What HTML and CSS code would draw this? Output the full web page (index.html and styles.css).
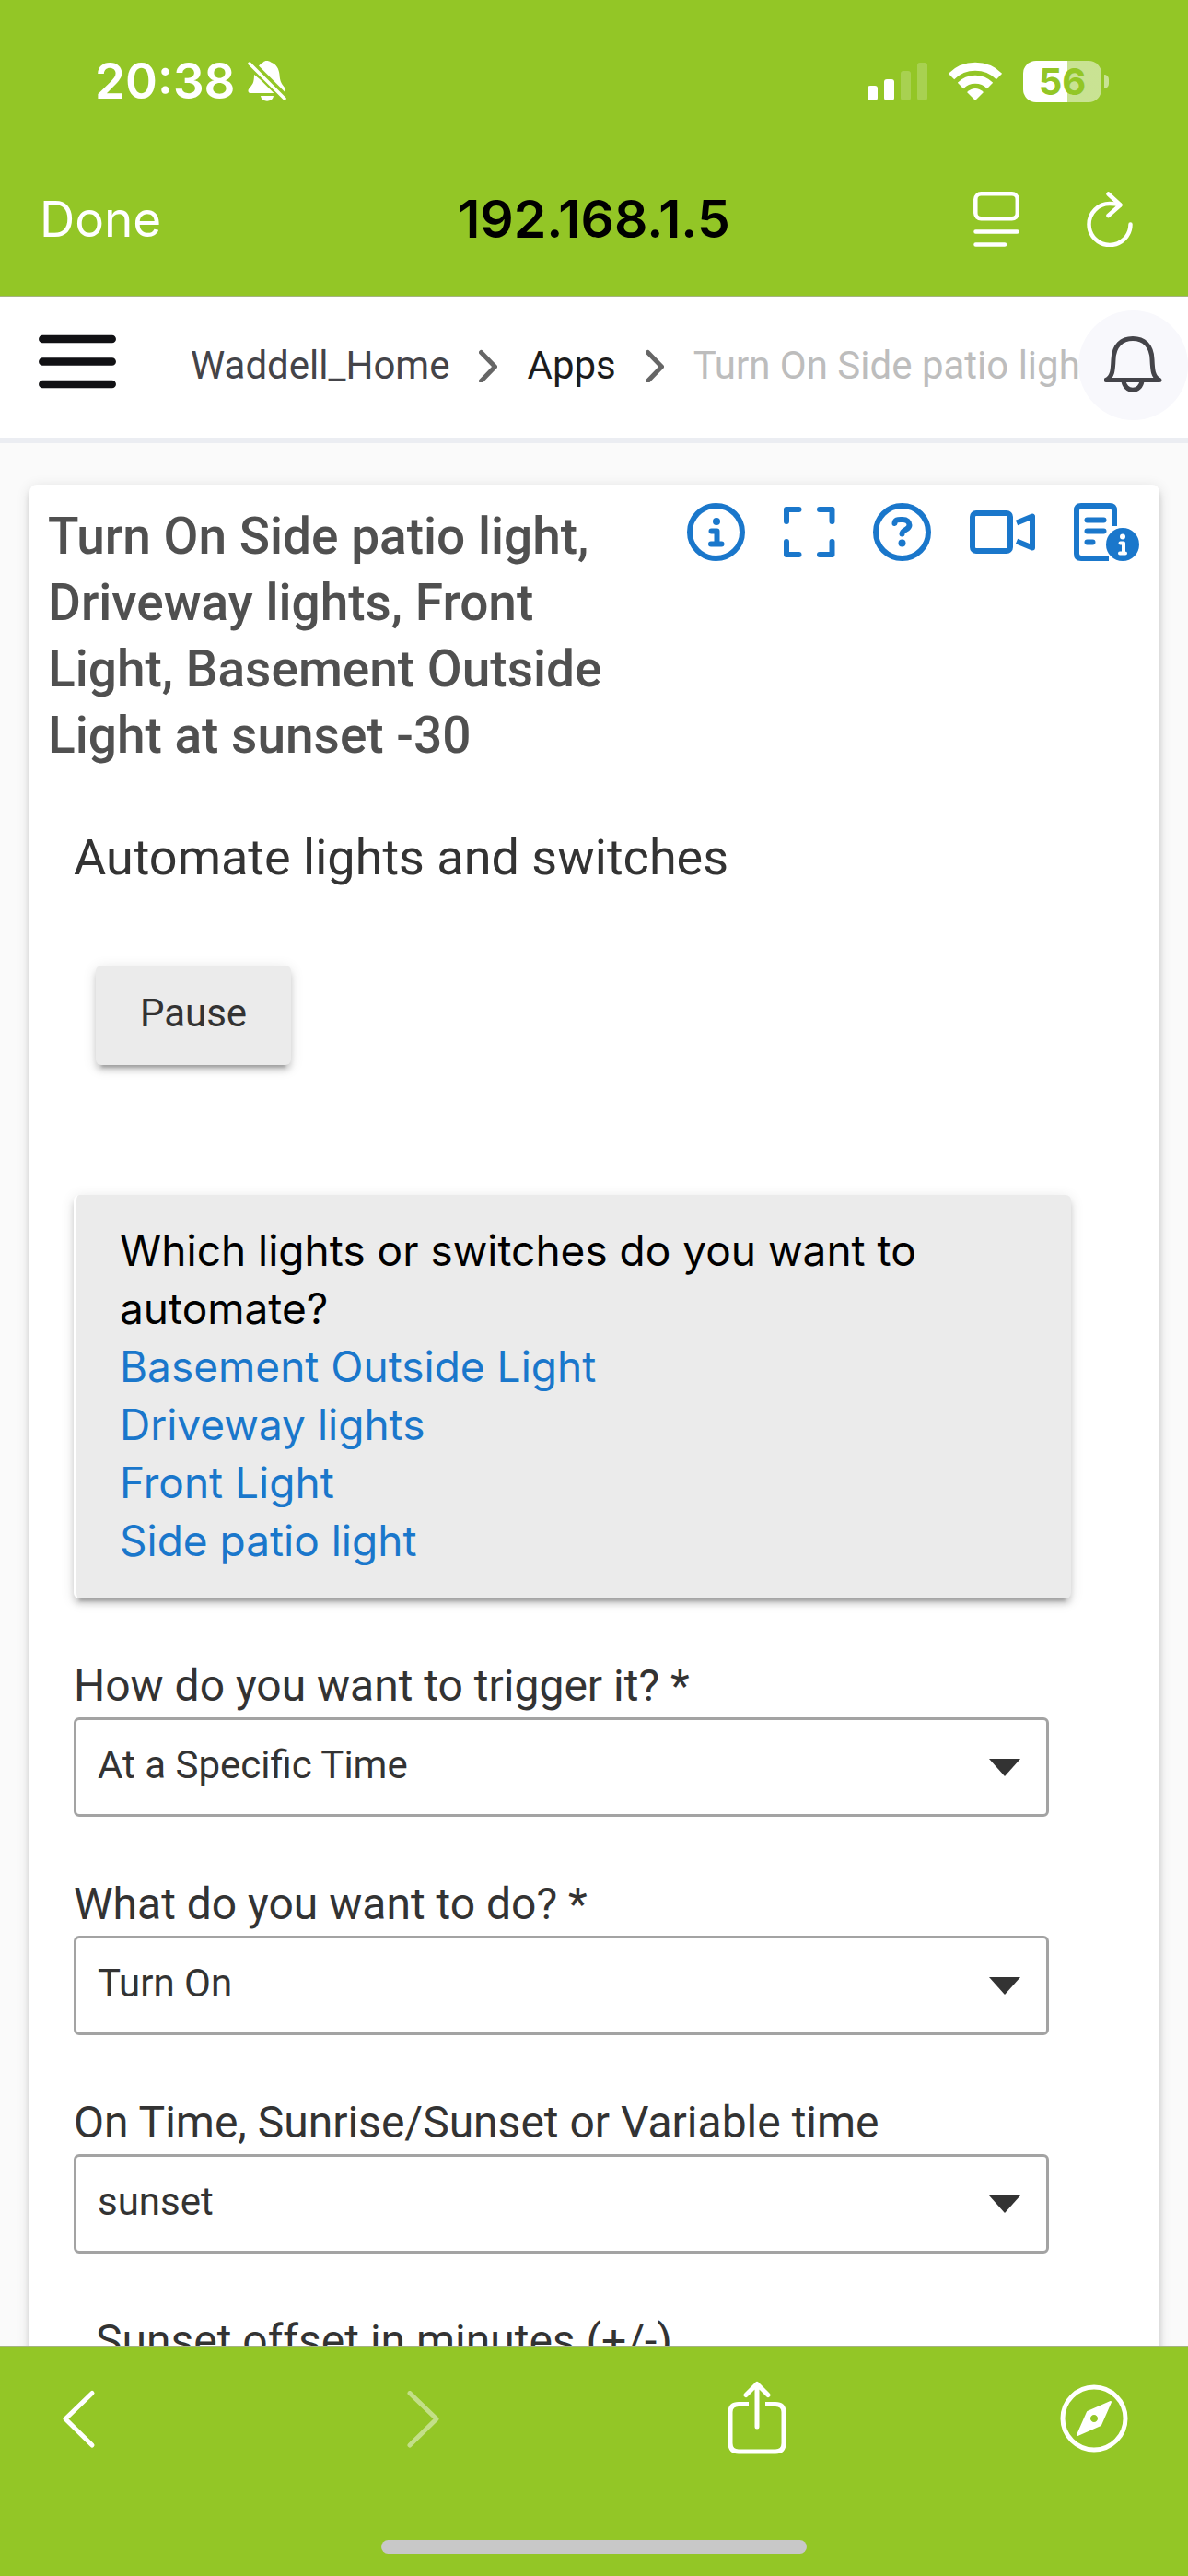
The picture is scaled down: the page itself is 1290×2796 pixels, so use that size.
FILE: index.html
```html
<!DOCTYPE html>
<html lang="en">
<head>
    <meta charset="UTF-8">
    <meta name="viewport" content="width=device-width, initial-scale=1.0">
    <title>192.168.1.5</title>
    <link rel="stylesheet" href="styles.css">
</head>
<body>
    <!-- Browser top -->
    <div class="browser-top">
        <div class="status-bar">
            <span class="status-time">20:38</span>
            <svg class="status-mute" width="42" height="46" viewBox="0 0 42 46" fill="#fff">
                <path d="M12 6.500C14 4 16 3 17 2.500C18 0.500 23 0.500 25 2.500C31 4.500 34 10 34.500 16C35 24 37 26 40 30C41.500 32 41.500 34 40 34.500Z"/>
                <path d="M7 16L32 36H3C0 36 0 32.500 1.500 31C5 27 7 25 7 16Z"/>
                <path d="M14 39H28C27 46.500 15 46.500 14 39Z"/>
                <path d="M2 4L40 42" stroke="#93c626" stroke-width="8"/>
                <path d="M2 4L40 42" stroke="#fff" stroke-width="3.500" stroke-linecap="round"/>
            </svg>
            <div class="status-right">
                <svg width="65" height="41" viewBox="0 0 65 41" fill="#fff">
                    <rect x="0" y="25" width="11" height="16" rx="3"/>
                    <rect x="18" y="18" width="11" height="23" rx="3"/>
                    <rect x="36" y="9" width="11" height="32" rx="3" opacity=".2"/>
                    <rect x="54" y="0" width="11" height="41" rx="3" opacity=".2"/>
                </svg>
                <svg width="58" height="42" viewBox="0 0 58 42" fill="none" stroke="#fff" stroke-width="9">
                    <path d="M3 16A37 37 0 0 1 55 16"/>
                    <path d="M13 26A22.500 22.500 0 0 1 45 26"/>
                    <path d="M29 42L20 33Q29 25 38 33Z" fill="#fff" stroke="none"/>
                </svg>
                <div class="battery">
                    <span class="battery-level">56</span>
                    <span class="battery-tip"></span>
                </div>
            </div>
        </div>
        <div class="address-bar">
            <button type="button" class="done-btn">Done</button>
            <div class="address">192.168.1.5</div>
            <div class="address-actions">
                <button type="button" class="icon-btn" aria-label="Page settings">
                    <svg width="50" height="60" viewBox="0 0 50 60" fill="none" stroke="#fff" stroke-width="4.500" stroke-linecap="round">
                        <rect x="2.300" y="2.300" width="45.500" height="27" rx="6"/>
                        <path d="M2.500 43.500H47.500M2.500 57.500H34"/>
                    </svg>
                </button>
                <button type="button" class="icon-btn" aria-label="Reload">
                    <svg width="50" height="60" viewBox="0 0 50 60" fill="none" stroke="#fff" stroke-width="4.500" stroke-linecap="round" stroke-linejoin="round">
                        <path d="M47.500 35.500A22.500 22.500 0 1 1 25 13Q31 13 36 14.500"/>
                        <path d="M23.500 2.500L36.500 14.500L23.500 26"/>
                    </svg>
                </button>
            </div>
        </div>
    </div>

    <!-- Site header -->
    <header class="site-header">
        <button type="button" class="icon-btn" aria-label="Menu">
            <svg width="84" height="72" viewBox="0 0 84 72" stroke="#111114" stroke-width="8.500" stroke-linecap="round">
                <path d="M4.300 7H79.700M4.300 31.500H79.700M4.300 56H79.700"/>
            </svg>
        </button>
        <nav class="breadcrumb">
            <a href="#" class="crumb-home">Waddell_Home</a>
            <svg width="20" height="36" viewBox="0 0 20 36"><path d="M2.500 3.500L17.500 19L2.500 34.500"/></svg>
            <a href="#" class="crumb-apps">Apps</a>
            <svg width="20" height="36" viewBox="0 0 20 36"><path d="M2.500 3.500L17.500 19L2.500 34.500"/></svg>
            <span class="crumb-current">Turn On Side patio light, Driveway lights</span>
        </nav>
        <button type="button" class="bell-btn" aria-label="Notifications">
            <svg width="64" height="64" viewBox="0 0 64 64" fill="none" stroke="#444449" stroke-width="5" stroke-linecap="round" stroke-linejoin="round">
                <path d="M2 47.500H60C53 44 52.500 37 52 25C51.500 10 43 2.500 31 2.500C19 2.500 10.500 10 10 25C9.500 37 9 44 2 47.500Z"/>
                <path d="M21 48C22 61.500 40 61.500 41 48"/>
            </svg>
        </button>
    </header>

    <main class="page">
        <div class="app-card">
            <div class="app-head">
                <h1>Turn On Side patio light, Driveway lights, Front Light, Basement Outside Light at sunset -30</h1>
                <div class="app-icons">
                    <button type="button" class="icon-btn" aria-label="Info">
                        <svg width="63" height="63" viewBox="0 0 63 63">
                            <circle cx="31.500" cy="31.500" r="28.500"/>
                            <path d="M26.500 30.500H32.500V44.500M26 44.500H37.500"/>
                            <circle class="dot" cx="32" cy="20" r="4"/>
                        </svg>
                    </button>
                    <button type="button" class="icon-btn" aria-label="Full screen">
                        <svg width="63" height="63" viewBox="0 0 63 63">
                            <path d="M7 20V7H20.500M43 7H56.500V20M56.500 42V56H43M20.500 56H7V42"/>
                        </svg>
                    </button>
                    <button type="button" class="icon-btn" aria-label="Help">
                        <svg width="63" height="63" viewBox="0 0 63 63">
                            <circle cx="31.500" cy="31.500" r="28.500"/>
                            <path d="M23.500 22C24 17.500 27 18 32 18C37 18 39.500 20.500 39.500 24C39.500 29 31.500 29 31.500 33.500"/>
                            <circle class="dot" cx="31.500" cy="43.500" r="4"/>
                        </svg>
                    </button>
                    <button type="button" class="icon-btn" aria-label="Video">
                        <svg width="79" height="63" viewBox="0 0 79 63">
                            <rect x="7" y="11" width="41" height="41" rx="4"/>
                            <path class="cut" d="M55 21.500L72 14.500V48.500L55 41.500"/>
                        </svg>
                    </button>
                    <button type="button" class="icon-btn" aria-label="Documentation">
                        <svg width="71" height="63" viewBox="0 0 71 63">
                            <path class="cut" d="M44 25V8Q44 3 39 3H8Q3 3 3 8V55Q3 60 8 60H38"/>
                            <path d="M14.500 18.500H32.500M14.500 30.500H32.500M14.500 42.500H20.500"/>
                            <circle class="dot" cx="53" cy="45" r="18"/>
                            <circle class="mini-dot" cx="53" cy="36.500" r="3"/>
                            <path class="mini" d="M50.500 43.500H54V54.500M50 54.500H56"/>
                        </svg>
                    </button>
                </div>
            </div>

            <form class="app-body">
                <h2>Automate lights and switches</h2>
                <button type="button" class="pause-btn">Pause</button>

                <div class="device-box">
                    <p>Which lights or switches do you want to automate?</p>
                    <a href="#">Basement Outside Light</a>
                    <a href="#">Driveway lights</a>
                    <a href="#">Front Light</a>
                    <a href="#">Side patio light</a>
                </div>

                <div class="field">
                    <label for="trigger">How do you want to trigger it? *</label>
                    <div class="select-wrap">
                        <select id="trigger"><option>At a Specific Time</option></select>
                    </div>
                </div>
                <div class="field">
                    <label for="action">What do you want to do? *</label>
                    <div class="select-wrap">
                        <select id="action"><option>Turn On</option></select>
                    </div>
                </div>
                <div class="field">
                    <label for="onTime">On Time, Sunrise/Sunset or Variable time</label>
                    <div class="select-wrap">
                        <select id="onTime"><option>sunset</option></select>
                    </div>
                </div>
                <div class="field field-offset">
                    <label for="offset">Sunset offset in minutes (+/-)</label>
                    <input type="number" id="offset" value="-30">
                </div>
            </form>
        </div>
    </main>

    <!-- Browser bottom -->
    <footer class="browser-bottom">
        <div class="toolbar">
            <button type="button" class="icon-btn" aria-label="Back">
                <svg width="74" height="80" viewBox="0 0 74 80"><path d="M48 13.500L19 41.500L48 70"/></svg>
            </button>
            <button type="button" class="icon-btn" aria-label="Forward" disabled>
                <svg width="74" height="80" viewBox="0 0 74 80" opacity=".45"><path d="M27 13.500L56 41.500L27 70"/></svg>
            </button>
            <button type="button" class="icon-btn" aria-label="Share">
                <svg width="74" height="80" viewBox="0 0 74 80">
                    <path class="tray" d="M28 25.500H17Q8 25.500 8 34V68Q8 77 17 77H57Q66 77 66 68V34Q66 25.500 57 25.500H46"/>
                    <path d="M37 3.500V50M25 15.500L37 3.500L49 15.500"/>
                </svg>
            </button>
            <button type="button" class="icon-btn" aria-label="Open in browser">
                <svg width="74" height="80" viewBox="0 0 74 80">
                    <circle cx="37" cy="41" r="34"/>
                    <path class="needle" fill-rule="evenodd" d="M55 23L44 48L19 59L30 34ZM37 36A5 5 0 1 0 37 46A5 5 0 1 0 37 36Z"/>
                </svg>
            </button>
        </div>
        <div class="home-indicator"></div>
    </footer>
</body>
</html>
```
FILE: styles.css
```css
* {
    box-sizing: border-box;
}
body {
    margin: 0;
    height: 100vh;
    display: flex;
    flex-direction: column;
    overflow: hidden;
    background: #fafafa;
    color: #333;
    font-family: Roboto, sans-serif;
    font-size: 42px;
}
button {
    border: none;
    background: none;
    padding: 0;
    font: inherit;
    color: inherit;
    cursor: pointer;
}
a {
    text-decoration: none;
}
svg {
    display: block;
    flex-shrink: 0;
}
h1, h2, p {
    margin: 0;
    font-weight: 400;
}

/* Browser top */
.browser-top {
    background: #93c626;
    border-bottom: 1px solid #a5b383;
    padding: 58px 43px 53px;
    font-family: Inter, sans-serif;
    color: #fff;
}
.status-bar {
    display: flex;
    align-items: center;
    height: 60px;
    padding: 0 43px 0 60px;
}
.status-time {
    font-size: 53px;
    font-weight: 600;
}
.status-mute {
    margin-left: 13px;
}
.status-right {
    display: flex;
    align-items: center;
    gap: 23px;
    margin-left: auto;
}
.battery {
    display: flex;
    align-items: center;
    gap: 3px;
}
.battery-level {
    width: 85px;
    height: 45px;
    border-radius: 14px;
    background: linear-gradient(to right, #fff 57%, rgba(255,255,255,0.5) 57%);
    color: #93c626;
    font-size: 40px;
    font-weight: 700;
    line-height: 45px;
    text-align: center;
}
.battery-tip {
    width: 5px;
    height: 15px;
    border-radius: 0 5px 5px 0;
    background: rgba(255,255,255,0.5);
}
.address-bar {
    display: grid;
    grid-template-columns: 1fr auto 1fr;
    align-items: center;
    height: 60px;
    margin-top: 90px;
}
.done-btn {
    justify-self: start;
    font-size: 53px;
    line-height: 60px;
}
.address {
    color: #000;
    font-size: 57px;
    font-weight: 600;
    line-height: 60px;
}
.address-actions {
    display: flex;
    justify-content: flex-end;
    gap: 73px;
    padding-right: 17px;
}

/* Site header */
.site-header {
    display: flex;
    align-items: center;
    height: 159px;
    background: #fff;
    border-bottom: 6px solid #ebedf2;
    padding: 0 0 4px 42px;
}
.breadcrumb {
    flex: 1;
    min-width: 0;
    display: flex;
    align-items: center;
    gap: 32px;
    margin-left: 81px;
    overflow: hidden;
    white-space: nowrap;
}
.breadcrumb path {
    fill: none;
    stroke: #666;
    stroke-width: 5;
    stroke-linecap: round;
    stroke-linejoin: round;
}
.crumb-home {
    color: #444449;
}
.crumb-apps {
    color: #1c1c1c;
}
.crumb-current {
    color: #bdbdbd;
}
.bell-btn {
    display: flex;
    align-items: center;
    justify-content: center;
    width: 119px;
    height: 119px;
    border-radius: 50%;
    background: #f8f8fc;
}

/* App page */
.page {
    flex: 1;
    min-height: 0;
    overflow: hidden;
    padding: 45px 31px 0 32px;
}
.app-card {
    background: #fff;
    border-radius: 8px;
    padding-bottom: 60px;
    box-shadow: 0 9px 3px -6px rgba(0,0,0,0.2), 0 6px 6px 0 rgba(0,0,0,0.14), 0 3px 15px 0 rgba(0,0,0,0.12);
}
.app-head {
    display: flex;
    align-items: flex-start;
    justify-content: space-between;
    gap: 46px;
    padding: 20px 22px 0 20px;
}
.app-head h1 {
    color: #505050;
    font-size: 55px;
    font-weight: 500;
    line-height: 72px;
}
.app-icons {
    display: flex;
    gap: 38px;
}
.app-icons svg {
    fill: none;
    stroke: #1a77cb;
    stroke-width: 6;
    stroke-linecap: round;
    stroke-linejoin: round;
}
.app-icons .dot {
    fill: #1a77cb;
    stroke: none;
}
.app-icons .cut {
    stroke-linecap: butt;
}
.app-icons .mini {
    stroke: #fff;
    stroke-width: 4;
}
.app-icons .mini-dot {
    fill: #fff;
    stroke: none;
}
.app-body {
    padding: 61px 96px 0 48px;
}
.app-body h2 {
    font-size: 54px;
    line-height: 72px;
}
.pause-btn {
    display: block;
    width: 212px;
    height: 108px;
    margin: 81px 0 0 24px;
    padding-bottom: 6px;
    border-radius: 6px;
    background: #ebebeb;
    box-shadow: 0 9px 3px -6px rgba(0,0,0,0.2), 0 6px 6px 0 rgba(0,0,0,0.14), 0 3px 15px 0 rgba(0,0,0,0.12);
}
.device-box {
    margin-top: 141px;
    padding: 29px 48px 31px 47px;
    border-left: 3px solid #fff;
    border-radius: 6px;
    background: #ebebeb;
    box-shadow: 0 9px 3px -6px rgba(0,0,0,0.2), 0 6px 6px 0 rgba(0,0,0,0.14), 0 3px 15px 0 rgba(0,0,0,0.12);
    color: #000;
    font-family: Inter, sans-serif;
    font-size: 46px;
    line-height: 63px;
}
.device-box a {
    display: block;
    color: #1a77cb;
}
.field {
    margin: 67px 24px 0 0;
}
.field label {
    display: block;
    margin-bottom: 6px;
    font-size: 48px;
    line-height: 56px;
}
.select-wrap {
    position: relative;
}
.select-wrap::after {
    content: "";
    position: absolute;
    right: 31px;
    top: 45px;
    border: 17px solid transparent;
    border-top: 19px solid #333;
    border-bottom: none;
    pointer-events: none;
}
.field select,
.field input {
    display: block;
    width: 100%;
    height: 108px;
    padding: 0 80px 6px 23px;
    border: 3px solid #a3a3a3;
    border-radius: 6px;
    background: #fff;
    color: #333;
    font: inherit;
    appearance: none;
}
.field-offset {
    padding-left: 24px;
}

/* Browser bottom */
.browser-bottom {
    background: #93c626;
    border-top: 1px solid #a5b383;
    padding: 37px 0 24px;
}
.toolbar {
    display: flex;
    justify-content: space-between;
    padding: 0 65px 0 52px;
}
.toolbar svg {
    fill: none;
    stroke: #fff;
    stroke-width: 5;
    stroke-linecap: round;
    stroke-linejoin: round;
}
.toolbar .tray {
    stroke-linecap: butt;
}
.toolbar .needle {
    fill: #fff;
    stroke-width: 2;
}
.home-indicator {
    width: 462px;
    height: 15px;
    margin: 93px auto 0;
    border-radius: 8px;
    background: #c8c8c8;
}
```
